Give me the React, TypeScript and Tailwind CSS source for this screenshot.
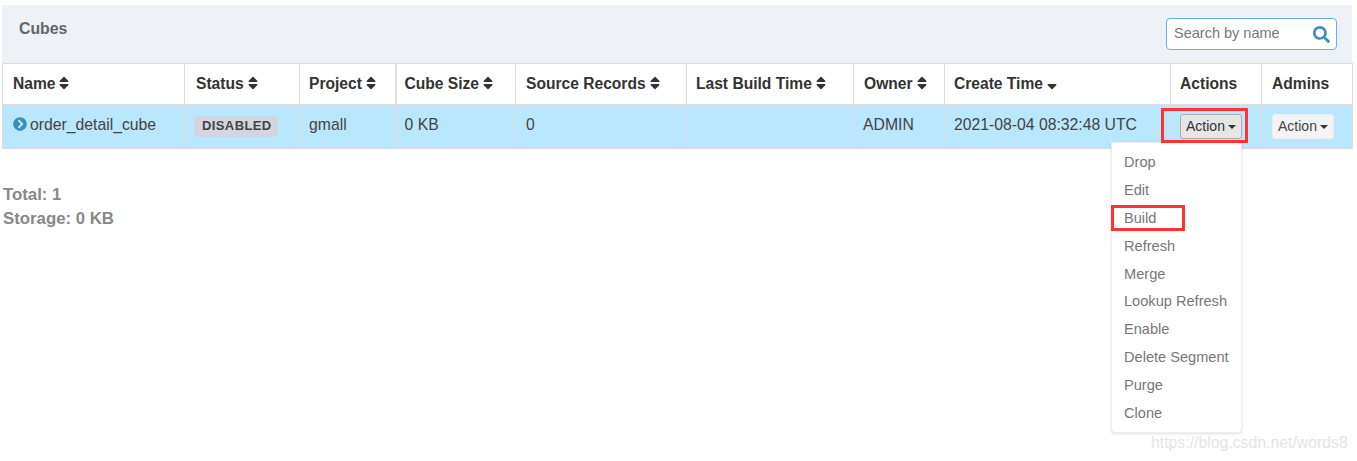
import { FaChevronCircleRight, FaSearch, FaSort, FaSortDown } from 'react-icons/fa';

const COLUMNS = [
  { name: 'Name', width: 'w-[182px]', pad: 'pl-[10px]', sort: 'both' },
  { name: 'Status', width: 'w-[115px]', pad: 'pl-[11px]', sort: 'both' },
  { name: 'Project', width: 'w-[96px]', pad: 'pl-[9px]', sort: 'both' },
  { name: 'Cube Size', width: 'w-[120px]', pad: 'pl-[8px] border-l-2', sort: 'both' },
  { name: 'Source Records', width: 'w-[171px]', pad: 'pl-[10px]', sort: 'both' },
  { name: 'Last Build Time', width: 'w-[167px]', pad: 'pl-[9px]', sort: 'both' },
  { name: 'Owner', width: 'w-[91px]', pad: 'pl-[10px]', sort: 'both' },
  { name: 'Create Time', width: 'w-[226px]', pad: 'pl-[9px]', sort: 'down' },
  { name: 'Actions', width: 'w-[91px]', pad: 'pl-[9px]', sort: 'none' },
  { name: 'Admins', width: 'w-[91px]', pad: 'pl-[10px]', sort: 'none' },
];

const MENU = ['Drop', 'Edit', 'Build', 'Refresh', 'Merge', 'Lookup Refresh', 'Enable', 'Delete Segment', 'Purge', 'Clone'];

function SortIcon({ sort }: { sort: string }) {
  if (sort === 'none') return null;
  const Icon = sort === 'both' ? FaSort : FaSortDown;
  return <Icon size={16} className="ml-[1px] inline-block align-[-2px] text-[#333]" />;
}

function ActionButton({ active }: { active?: boolean }) {
  return (
    <button
      className={
        active
          ? 'inline-flex h-[25px] w-[62px] items-center justify-center rounded-[3px] border border-[#adadad] bg-[#e6e6e6] text-[14px] text-[#333]'
          : 'inline-flex h-[25px] w-[62px] items-center justify-center rounded-[3px] border border-[#eee] bg-[#f4f4f4] text-[14px] text-[#444]'
      }
    >
      Action
      <span className="ml-[3px] h-0 w-0 border-x-[4px] border-t-[4px] border-x-transparent border-t-[#333]" />
    </button>
  );
}

export default function App() {
  return (
    <div className="relative h-[461px] w-[1357px] overflow-hidden bg-white pl-[2px] pt-[5px] font-['Liberation_Sans',Arial,sans-serif] text-[15.75px] text-[#333]">
      <div className="flex h-[58px] w-[1350px] items-start justify-between bg-[#eef1f6] pl-[17px] pr-[15px]">
        <h3 className="mt-[15px] text-[15.8px] font-bold leading-[18px] text-[#666]">Cubes</h3>
        <div className="mt-[13px] flex h-[32px] w-[171px] items-center justify-between rounded-[4px] border border-[#66afe9] bg-white pl-[7px] pr-[6px]">
          <span className="text-[14.5px] text-[#777]">Search by name</span>
          <FaSearch size={17} className="text-[#428bca]" />
        </div>
      </div>

      <table className="w-[1350px] table-fixed border-collapse">
        <thead>
          <tr className="h-[41px] bg-white">
            {COLUMNS.map((c) => (
              <th key={c.name} className={`${c.width} ${c.pad} border-x border-t border-b-2 border-[#ddd] text-left text-[15.6px] font-bold text-[#333]`}>
                {c.name}
                <SortIcon sort={c.sort} />
              </th>
            ))}
          </tr>
        </thead>
        <tbody>
          <tr className="h-[44px] bg-[#b9e7fe] text-[#444]">
            <td className="border border-[#ddd] pb-[3px] pl-[10px]">
              <FaChevronCircleRight size={14} className="mr-[3px] inline-block align-[-1px] text-[#3c8dbc]" />
              order_detail_cube
            </td>
            <td className="border border-[#ddd] pl-[9px]">
              <span className="inline-block h-[21px] -translate-y-[2px] rounded-[4px] bg-[#d2d6de] pl-[8px] pr-[6px] text-[13px] font-bold leading-[20px] tracking-[0.4px] text-[#444]">DISABLED</span>
            </td>
            <td className="border border-[#ddd] pb-[3px] pl-[9px]">gmall</td>
            <td className="border border-l-2 border-[#ddd] pb-[3px] pl-[8px]">0 KB</td>
            <td className="border border-[#ddd] pb-[3px] pl-[10px]">0</td>
            <td className="border border-[#ddd]" />
            <td className="border border-[#ddd] pb-[3px] pl-[9px]">ADMIN</td>
            <td className="border border-[#ddd] pb-[3px] pl-[9px]">2021-08-04 08:32:48 UTC</td>
            <td className="border border-[#ddd] pl-[9px]">
              <ActionButton active />
            </td>
            <td className="border border-[#ddd] pl-[10px]">
              <ActionButton />
            </td>
          </tr>
        </tbody>
      </table>

      <div className="mt-[34px] pl-[1px] text-[16.8px] font-bold leading-[24px] text-[#888]">
        <div>Total: 1</div>
        <div>Storage: 0 KB</div>
      </div>

      {/* open dropdown */}
      <ul className="absolute left-[1111px] top-[142px] w-[131px] rounded-b-[4px] border border-[#eee] bg-white py-[5px] text-[14.6px] text-[#777] shadow-[0_1px_3px_rgba(0,0,0,0.12)]">
        {MENU.map((m) => (
          <li key={m} className="h-[27.9px] pl-[12px] leading-[28px]">{m}</li>
        ))}
      </ul>

      {/* red annotations */}
      <div className="absolute left-[1161px] top-[108px] h-[35px] w-[87px] border-[3px] border-[#ff3333]" />
      <div className="absolute left-[1111px] top-[205px] h-[26px] w-[74px] border-[3px] border-[#ff3333]" />

      <div className="absolute left-[1151px] top-[433px] text-[15.8px] leading-[20px] text-[#e4e4e4]">https://blog.csdn.net/words8</div>
    </div>
  );
}
